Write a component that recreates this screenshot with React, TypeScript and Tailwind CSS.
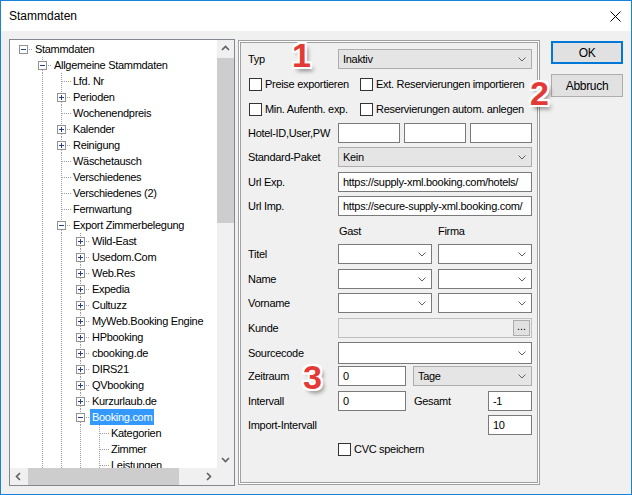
import type { ReactNode } from "react";
import clsx from "clsx";

type TreeNode = { level: number; label: string; exp?: "+" | "-"; selected?: boolean };

const tree: TreeNode[] = [
  { level: 0, label: "Stammdaten", exp: "-" },
  { level: 1, label: "Allgemeine Stammdaten", exp: "-" },
  { level: 2, label: "Lfd. Nr" },
  { level: 2, label: "Perioden", exp: "+" },
  { level: 2, label: "Wochenendpreis" },
  { level: 2, label: "Kalender", exp: "+" },
  { level: 2, label: "Reinigung", exp: "+" },
  { level: 2, label: "Wäschetausch" },
  { level: 2, label: "Verschiedenes" },
  { level: 2, label: "Verschiedenes (2)" },
  { level: 2, label: "Fernwartung" },
  { level: 2, label: "Export Zimmerbelegung", exp: "-" },
  { level: 3, label: "Wild-East", exp: "+" },
  { level: 3, label: "Usedom.Com", exp: "+" },
  { level: 3, label: "Web.Res", exp: "+" },
  { level: 3, label: "Expedia", exp: "+" },
  { level: 3, label: "Cultuzz", exp: "+" },
  { level: 3, label: "MyWeb.Booking Engine", exp: "+" },
  { level: 3, label: "HPbooking", exp: "+" },
  { level: 3, label: "cbooking.de", exp: "+" },
  { level: 3, label: "DIRS21", exp: "+" },
  { level: 3, label: "QVbooking", exp: "+" },
  { level: 3, label: "Kurzurlaub.de", exp: "+" },
  { level: 3, label: "Booking.com", exp: "-", selected: true },
  { level: 4, label: "Kategorien" },
  { level: 4, label: "Zimmer" },
  { level: 4, label: "Leistungen" },
  // below the visible area, only there so the guide lines continue
  { level: 4, label: "Preise" },
  { level: 3, label: "Tomas", exp: "+" },
  { level: 2, label: "Import", exp: "+" },
  { level: 1, label: "Benutzer", exp: "+" },
];

const VISIBLE = 27;

function hasNext(i: number) {
  const l = tree[i].level;
  for (let j = i + 1; j < tree.length; j++) {
    if (tree[j].level < l) return false;
    if (tree[j].level === l) return true;
  }
  return false;
}

function ancestorHasNext(i: number, level: number) {
  for (let j = i - 1; j >= 0; j--) {
    if (tree[j].level === level) return hasNext(j);
  }
  return false;
}

const DOT = "#a0a0a0";

function GuideCell({ line }: { line: boolean }) {
  return (
    <svg width="19" height="16" className="shrink-0">
      {line && <line x1="9.5" y1="0" x2="9.5" y2="16" stroke={DOT} strokeDasharray="1 1" />}
    </svg>
  );
}

function NodeCell({ top, bottom, exp }: { top: boolean; bottom: boolean; exp?: "+" | "-" }) {
  return (
    <svg width="19" height="16" className="shrink-0">
      {top && <line x1="9.5" y1="0" x2="9.5" y2={exp ? 4 : 8} stroke={DOT} strokeDasharray="1 1" />}
      {bottom && <line x1="9.5" y1={exp ? 13 : 8} x2="9.5" y2="16" stroke={DOT} strokeDasharray="1 1" />}
      <line x1={exp ? 15 : 10} y1="8.5" x2="19" y2="8.5" stroke={DOT} strokeDasharray="1 1" />
      {exp && (
        <>
          <rect x="5.5" y="4.5" width="8" height="8" fill="#fff" stroke="#919191" />
          <line x1="7" y1="8.5" x2="12" y2="8.5" stroke="#27408b" />
          {exp === "+" && <line x1="9.5" y1="6" x2="9.5" y2="11" stroke="#27408b" />}
        </>
      )}
    </svg>
  );
}

function Arrow({ dir }: { dir: "up" | "down" | "left" | "right" }) {
  const pts = {
    up: "5,10 8.5,6.5 12,10",
    down: "5,7 8.5,10.5 12,7",
    left: "10,5 6.5,8.5 10,12",
    right: "7,5 10.5,8.5 7,12",
  }[dir];
  return (
    <svg width="17" height="17" className="shrink-0">
      <polyline points={pts} fill="none" stroke="#606060" strokeWidth="1.6" />
    </svg>
  );
}

function Tree() {
  return (
    <div className="flex h-[447px] w-[226px] shrink-0 flex-col border border-[#828790] bg-white">
      <div className="flex min-h-0 flex-1">
        <div className="min-w-0 flex-1 overflow-hidden pt-[1px] pl-[4px]">
          {tree.slice(0, VISIBLE).map((n, i) => (
            <div key={i} className="flex h-4 items-center">
              {Array.from({ length: n.level }, (_, c) => (
                <GuideCell key={c} line={ancestorHasNext(i, c)} />
              ))}
              <NodeCell top={n.level > 0} bottom={hasNext(i)} exp={n.exp} />
              <span
                className={clsx(
                  "h-4 whitespace-nowrap px-[2px] leading-4",
                  n.selected && "bg-[#3399ff] text-white"
                )}
              >
                {n.label}
              </span>
            </div>
          ))}
        </div>
        <div className="flex w-[17px] shrink-0 flex-col bg-[#f0f0f0]">
          <Arrow dir="up" />
          <div className="mt-[1px] h-[165px] bg-[#cdcdcd]" />
          <div className="flex-1" />
          <Arrow dir="down" />
        </div>
      </div>
      <div className="flex h-[17px] shrink-0">
        <div className="flex flex-1 bg-[#f0f0f0]">
          <Arrow dir="left" />
          <div className="ml-[1px] w-[151px] bg-[#cdcdcd]" />
          <div className="flex-1" />
          <Arrow dir="right" />
        </div>
        <div className="w-[17px] bg-[#f0f0f0]" />
      </div>
    </div>
  );
}

function Chevron() {
  return (
    <svg width="8" height="5" className="shrink-0">
      <polyline points="0.5,0.5 4,4 7.5,0.5" fill="none" stroke="#606060" />
    </svg>
  );
}

function Combo({ value, w, grey }: { value?: string; w: string; grey?: boolean }) {
  return (
    <div
      className={clsx(
        "flex h-full shrink-0 items-center justify-between border pl-[4px] pr-[5px]",
        grey ? "border-[#adadad] bg-[#e5e5e5]" : "border-[#7a7a7a] bg-white",
        w
      )}
    >
      <span className="whitespace-nowrap">{value}</span>
      <Chevron />
    </div>
  );
}

function TextBox({ value, w }: { value?: string; w: string }) {
  return (
    <div
      className={clsx(
        "flex h-full shrink-0 items-center overflow-hidden whitespace-nowrap border border-[#7a7a7a] bg-white pl-[4px]",
        w
      )}
    >
      {value}
    </div>
  );
}

function CheckBox({ label, w }: { label: string; w?: string }) {
  return (
    <div className={clsx("flex shrink-0 items-center gap-[3px]", w)}>
      <div className="h-[13px] w-[13px] shrink-0 border border-[#333333] bg-white" />
      <span className="whitespace-nowrap">{label}</span>
    </div>
  );
}

function Row({ label, className, children }: { label?: string; className: string; children?: ReactNode }) {
  return (
    <div className={clsx("flex shrink-0 items-center", className)}>
      <span className="w-[90px] shrink-0 whitespace-nowrap">{label}</span>
      {children}
    </div>
  );
}

function Marker({ n, className }: { n: string; className: string }) {
  return (
    <div
      className={clsx(
        "pointer-events-none absolute text-[34px] font-bold leading-none tracking-normal text-[#e53935] [text-shadow:-2px_-2px_0_#fff,2px_-2px_0_#fff,-2px_2px_0_#fff,2px_2px_0_#fff,0_-2px_0_#fff,0_2px_0_#fff,-2px_0_0_#fff,2px_0_0_#fff,3px_4px_4px_rgba(0,0,0,0.45)]",
        className
      )}
    >
      {n}
    </div>
  );
}

function Button({ children, primary }: { children: ReactNode; primary?: boolean }) {
  return (
    <div
      className={clsx(
        "flex h-[23px] w-[72px] items-center justify-center bg-[#e1e1e1] text-[12px]",
        primary ? "border-2 border-[#0078d7]" : "border border-[#adadad]"
      )}
    >
      {children}
    </div>
  );
}

export default function App() {
  return (
    <div className="relative h-[495px] w-[632px] overflow-hidden border border-[#1883d7] bg-[#f0f0f0] font-['Liberation_Sans',Arial,sans-serif] text-[11px] tracking-[-0.3px] text-black">
      <div className="flex h-[30px] items-center justify-between bg-white pl-[8px] pr-[10px] text-[12px] tracking-normal">
        <span>Stammdaten</span>
        <svg width="11" height="11">
          <line x1="0.5" y1="0.5" x2="10.5" y2="10.5" stroke="#000" />
          <line x1="10.5" y1="0.5" x2="0.5" y2="10.5" stroke="#000" />
        </svg>
      </div>

      <div className="flex pl-[8px] pt-[8px]">
        <Tree />

        <div className="ml-[3px] mt-[1px] flex h-[445px] w-[302px] shrink-0 flex-col border border-[#a0a0a0] pl-[9px] shadow-[inset_0_0_0_1px_#fff,inset_0_0_0_2px_#a0a0a0]">
          <Row label="Typ" className="mt-[8px] h-[20px]">
            <Combo value="Inaktiv" w="w-[194px]" grey />
          </Row>
          <div className="mt-[5px] flex h-[20px] shrink-0 items-center pl-[1px]">
            <CheckBox label="Preise exportieren" w="w-[111px]" />
            <CheckBox label="Ext. Reservierungen importieren" />
          </div>
          <div className="mt-[5px] flex h-[20px] shrink-0 items-center pl-[1px]">
            <CheckBox label="Min. Aufenth. exp." w="w-[111px]" />
            <CheckBox label="Reservierungen autom. anlegen" />
          </div>
          <Row label="Hotel-ID,User,PW" className="mt-[4px] h-[20px]">
            <div className="flex h-full gap-[4px]">
              <TextBox w="w-[62px]" />
              <TextBox w="w-[62px]" />
              <TextBox w="w-[62px]" />
            </div>
          </Row>
          <Row label="Standard-Paket" className="mt-[4px] h-[20px]">
            <Combo value="Kein" w="w-[194px]" grey />
          </Row>
          <Row label="Url Exp." className="mt-[5px] h-[20px]">
            <TextBox value="https://supply-xml.booking.com/hotels/" w="w-[194px]" />
          </Row>
          <Row label="Url Imp." className="mt-[4px] h-[20px]">
            <TextBox value="https://secure-supply-xml.booking.com/" w="w-[194px]" />
          </Row>
          <Row className="mt-[7px] h-[16px]">
            <span className="w-[100px] pl-[1px]">Gast</span>
            <span>Firma</span>
          </Row>
          <Row label="Titel" className="mt-[5px] h-[20px]">
            <div className="flex h-full gap-[6px]">
              <Combo w="w-[94px]" />
              <Combo w="w-[94px]" />
            </div>
          </Row>
          <Row label="Name" className="mt-[5px] h-[20px]">
            <div className="flex h-full gap-[6px]">
              <Combo w="w-[94px]" />
              <Combo w="w-[94px]" />
            </div>
          </Row>
          <Row label="Vorname" className="mt-[4px] h-[20px]">
            <div className="flex h-full gap-[6px]">
              <Combo w="w-[94px]" />
              <Combo w="w-[94px]" />
            </div>
          </Row>
          <Row label="Kunde" className="mt-[5px] h-[20px]">
            <div className="flex h-full w-[194px] justify-end border border-[#bfbfbf] bg-[#f0f0f0] p-[1px]">
              <div className="flex h-full w-[17px] items-center justify-center border border-[#adadad] bg-[#e1e1e1] pb-[3px] tracking-normal">
                ...
              </div>
            </div>
          </Row>
          <Row label="Sourcecode" className="mt-[4px] h-[22px]">
            <Combo w="w-[194px]" />
          </Row>
          <Row label="Zeitraum" className="mt-[2px] h-[20px]">
            <div className="flex h-full gap-[7px]">
              <TextBox value="0" w="w-[68px]" />
              <Combo value="Tage" w="w-[119px]" grey />
            </div>
          </Row>
          <Row label="Intervall" className="mt-[5px] h-[20px]">
            <TextBox value="0" w="w-[68px]" />
            <span className="ml-[8px] w-[74px]">Gesamt</span>
            <TextBox value="-1" w="w-[44px]" />
          </Row>
          <div className="mt-[4px] flex h-[20px] shrink-0 items-center">
            <span className="w-[240px]">Import-Intervall</span>
            <TextBox value="10" w="w-[44px]" />
          </div>
          <div className="mt-[6px] flex h-[16px] shrink-0 items-center pl-[90px]">
            <CheckBox label="CVC speichern" />
          </div>
        </div>

        <div className="ml-[11px] mt-[2px] flex flex-col gap-[10px]">
          <Button primary>OK</Button>
          <Button>Abbruch</Button>
        </div>
      </div>

      <Marker n="1" className="left-[291px] top-[37px]" />
      <Marker n="2" className="left-[529px] top-[75px]" />
      <Marker n="3" className="left-[302px] top-[359px]" />
    </div>
  );
}
